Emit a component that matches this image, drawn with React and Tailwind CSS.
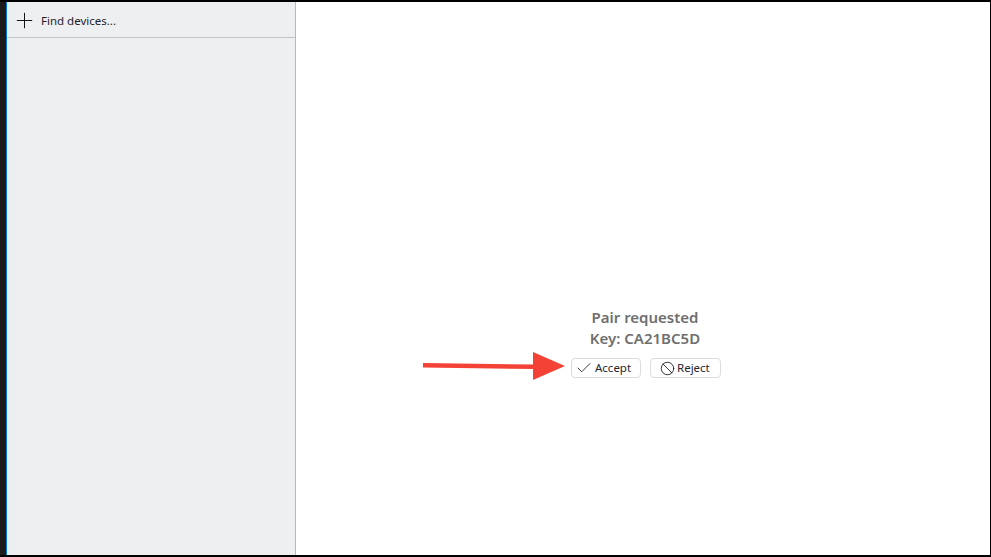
import { Plus, Check, Ban } from "lucide-react";

export default function App() {
  return (
    <div className="w-[991px] h-[557px] flex bg-black pt-[2px] pb-[2px] pr-[1px] overflow-hidden font-['Noto_Sans',sans-serif]">
      <div className="w-[6px] bg-[#1c1c1c]" />
      <div className="w-px bg-[#0078d7]" />

      {/* sidebar */}
      <aside className="w-[289px] bg-[#eeeff1] border-r border-[#b9b9b9] flex flex-col">
        <div className="h-[36px] pt-[2px] border-b border-[#c4c4c4] flex items-center pl-[5px] gap-[4px] text-[11.5px] text-[#1f1f2b]">
          <Plus size={25} strokeWidth={0.95} className="text-[#111111]" />
          <span>Find devices...</span>
        </div>
      </aside>

      {/* main area */}
      <main className="relative flex-1 bg-white flex flex-col items-center pt-[305px] pl-[6px]">
        <div className="pr-[2px] text-[15px] leading-[21px] font-semibold text-[#6f6f6f]">Pair requested</div>
        <div className="pr-[2px] text-[15px] leading-[21px] font-semibold text-[#6f6f6f]">Key: CA21BC5D</div>
        <div className="flex gap-[9px] mt-[9px]">
          <button className="w-[70px] h-[20px] bg-white border border-[#dcdcdc] rounded-[4px] flex items-center pl-[3px] gap-[2px] text-[11.5px] text-[#26262f]">
            <Check size={18} strokeWidth={1.2} />
            Accept
          </button>
          <button className="w-[71px] h-[20px] bg-white border border-[#dcdcdc] rounded-[4px] flex items-center pl-[9px] gap-[2px] text-[11.5px] text-[#26262f]">
            <Ban size={15} strokeWidth={1.5} />
            Reject
          </button>
        </div>

        {/* annotation arrow */}
        <svg className="absolute left-[127px] top-[346px]" width="146" height="36" viewBox="0 0 146 36">
          <polygon points="0,15 112,16.5 112,21 0,19.5" fill="#f44336" />
          <polygon points="110,4 142,18 110,32" fill="#f44336" />
        </svg>
      </main>
    </div>
  );
}
